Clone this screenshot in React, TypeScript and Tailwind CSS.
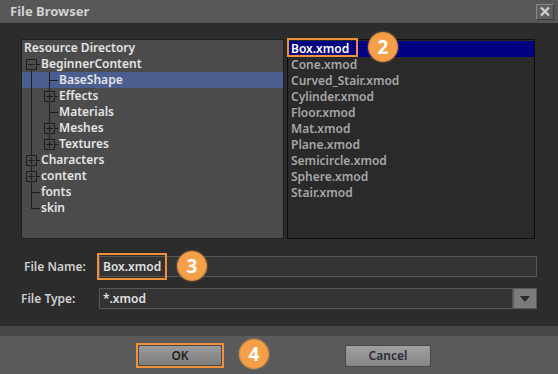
import React from "react";

type Cell = "I" | "T" | "L" | "EM" | "EP" | "EPL" | "EMR" | "_";

const C = "#1e1e1e";

function Gutter({ kind }: { kind: Cell }) {
  return (
    <svg width="18" height="16" className="shrink-0" shapeRendering="crispEdges">
      {kind === "I" && <line x1="9.5" y1="0" x2="9.5" y2="16" stroke={C} />}
      {kind === "T" && (
        <>
          <line x1="9.5" y1="0" x2="9.5" y2="16" stroke={C} />
          <line x1="9.5" y1="8.5" x2="18" y2="8.5" stroke={C} />
        </>
      )}
      {kind === "L" && (
        <>
          <line x1="9.5" y1="0" x2="9.5" y2="8.5" stroke={C} />
          <line x1="9.5" y1="8.5" x2="18" y2="8.5" stroke={C} />
        </>
      )}
      {(kind === "EM" || kind === "EP" || kind === "EPL" || kind === "EMR") && (
        <>
          {kind !== "EMR" && <line x1="9.5" y1="0" x2="9.5" y2="3.5" stroke={C} />}
          {kind !== "EPL" && <line x1="9.5" y1="13.5" x2="9.5" y2="16" stroke={C} />}
          <rect x="4.5" y="3.5" width="10" height="10" fill="none" stroke={C} />
          <line x1="6" y1="8.5" x2="13" y2="8.5" stroke={C} />
          {kind !== "EM" && kind !== "EMR" && <line x1="9.5" y1="5" x2="9.5" y2="12" stroke={C} />}
          <line x1="14.5" y1="8.5" x2="18" y2="8.5" stroke={C} />
        </>
      )}
    </svg>
  );
}

const tree: { cells: Cell[]; label: string; sel?: boolean }[] = [
  { cells: ["EMR"], label: "BeginnerContent" },
  { cells: ["I", "T"], label: "BaseShape", sel: true },
  { cells: ["I", "EP"], label: "Effects" },
  { cells: ["I", "T"], label: "Materials" },
  { cells: ["I", "EP"], label: "Meshes" },
  { cells: ["I", "EPL"], label: "Textures" },
  { cells: ["EP"], label: "Characters" },
  { cells: ["EP"], label: "content" },
  { cells: ["T"], label: "fonts" },
  { cells: ["L"], label: "skin" },
];

const files = [
  "Box.xmod",
  "Cone.xmod",
  "Curved_Stair.xmod",
  "Cylinder.xmod",
  "Floor.xmod",
  "Mat.xmod",
  "Plane.xmod",
  "Semicircle.xmod",
  "Sphere.xmod",
  "Stair.xmod",
];

function Badge({ n, className }: { n: string; className: string }) {
  return (
    <div
      className={
        "absolute w-[30px] h-[30px] rounded-full bg-[#f5a048] border border-[#e48a33] flex items-center justify-center text-white font-bold text-[19px] leading-none shadow-[0_0_2px_rgba(255,200,150,0.6)] " +
        className
      }
    >
      {n}
    </div>
  );
}

export default function App() {
  return (
    <div
      className="relative w-[558px] h-[374px] bg-[#2c2c2c] flex flex-col overflow-hidden"
      style={{ fontFamily: '"Noto Sans", "Open Sans", sans-serif' }}
    >
      {/* Title bar */}
      <div className="h-[23px] shrink-0 bg-[#575757] flex items-center justify-between pl-[10px] pr-[4px]">
        <span className="text-[13px] font-bold text-[#d2d2d2] leading-none">File Browser</span>
        <div className="w-[18px] h-[16px] bg-[#5f5f5f] border border-t-[#8a8a8a] border-l-[#8a8a8a] border-r-[#3a3a3a] border-b-[#3a3a3a] flex items-center justify-center">
          <svg width="12" height="11" viewBox="0 0 12 11">
            <path d="M2 1.5 L10 9.5 M10 1.5 L2 9.5" stroke="#cfcfcf" strokeWidth="2.4" />
          </svg>
        </div>
      </div>

      {/* Panels */}
      <div className="flex gap-[3px] pl-[21px] pt-[16px] h-[216px] shrink-0">
        <div className="w-[263px] h-[200px] bg-[#4b4b4b] border border-[#1f1f1f] flex flex-col text-[12px] font-semibold text-[#e4e4e4] leading-[16px]">
          <div className="h-[16px] pl-[2px] whitespace-nowrap">Resource Directory</div>
          {tree.map((r) => (
            <div
              key={r.label}
              className={
                "h-[16px] flex items-center whitespace-nowrap " + (r.sel ? "bg-[#4b5e90]" : "")
              }
            >
              {r.cells.map((c, i) => (
                <Gutter key={i} kind={c} />
              ))}
              <span className="pl-px">{r.label}</span>
            </div>
          ))}
        </div>
        <div className="w-[248px] h-[200px] bg-[#2a2a2a] border border-[#0d0d0d] flex flex-col text-[12px] font-semibold leading-[16px] pt-px">
          {files.map((f, i) => (
            <div
              key={f}
              className={
                "h-[16px] pl-[3px] whitespace-nowrap " +
                (i === 0 ? "bg-[#000080] text-white" : "text-[#a6a6a6]")
              }
            >
              {f}
            </div>
          ))}
        </div>
      </div>

      {/* Form */}
      <div className="flex flex-col gap-[11px] pt-[17px]">
        <div className="flex items-center h-[21px]">
          <span className="w-[99px] pl-[24px] text-[12px] font-semibold text-[#cfcfcf]">File Name:</span>
          <div className="w-[438px] h-[21px] bg-[#333333] border border-[#565656] flex items-center pl-[3px] text-[12px] font-semibold text-[#e0e0e0]">
            Box.xmod
          </div>
        </div>
        <div className="flex items-center h-[21px]">
          <span className="w-[99px] pl-[21px] text-[12px] font-semibold text-[#cfcfcf]">File Type:</span>
          <div className="w-[414px] h-[21px] bg-[#333333] border border-[#565656] flex items-center pl-[3px] text-[12px] font-semibold text-[#e0e0e0]">
            *.xmod
          </div>
          <div className="w-[24px] h-[21px] bg-[#7b7b7b] border border-[#5a5a5a] flex items-center justify-center">
            <svg width="10" height="6" viewBox="0 0 10 6">
              <path d="M0 0 H10 L5 6 Z" fill="#2a2a2a" />
            </svg>
          </div>
        </div>
      </div>

      <div className="mt-auto h-[10px] shrink-0 bg-[#464646]" />
      {/* Footer */}
      <div className="h-[38px] shrink-0 bg-[#5a5a5a] flex items-start pt-[9px]">
        <div className="ml-[138px] w-[84px] h-[21px] rounded-[2px] bg-gradient-to-b from-[#9a9a9a] to-[#7e7e7e] border border-[#4a4a4a] flex items-center justify-center text-[12px] font-semibold text-[#1e1e1e]">
          OK
        </div>
        <div className="ml-[123px] w-[86px] h-[22px] rounded-[2px] bg-gradient-to-b from-[#a0a0a0] to-[#868686] border border-[#4a4a4a] flex items-center justify-center text-[12px] font-semibold text-[#2a2a3a]">
          Cancel
        </div>
      </div>

      {/* Annotations */}
      <div className="absolute left-[287px] top-[38px] w-[71px] h-[19px] border-2 border-[#f0913a]" />
      <Badge n="2" className="left-[368px] top-[32px]" />
      <div className="absolute left-[97px] top-[253px] w-[70px] h-[27px] border-2 border-[#f0913a]" />
      <Badge n="3" className="left-[177px] top-[251px]" />
      <div className="absolute left-[136px] top-[343px] w-[88px] h-[25px] border-2 border-[#f0913a]" />
      <Badge n="4" className="left-[239px] top-[339px]" />
    </div>
  );
}
